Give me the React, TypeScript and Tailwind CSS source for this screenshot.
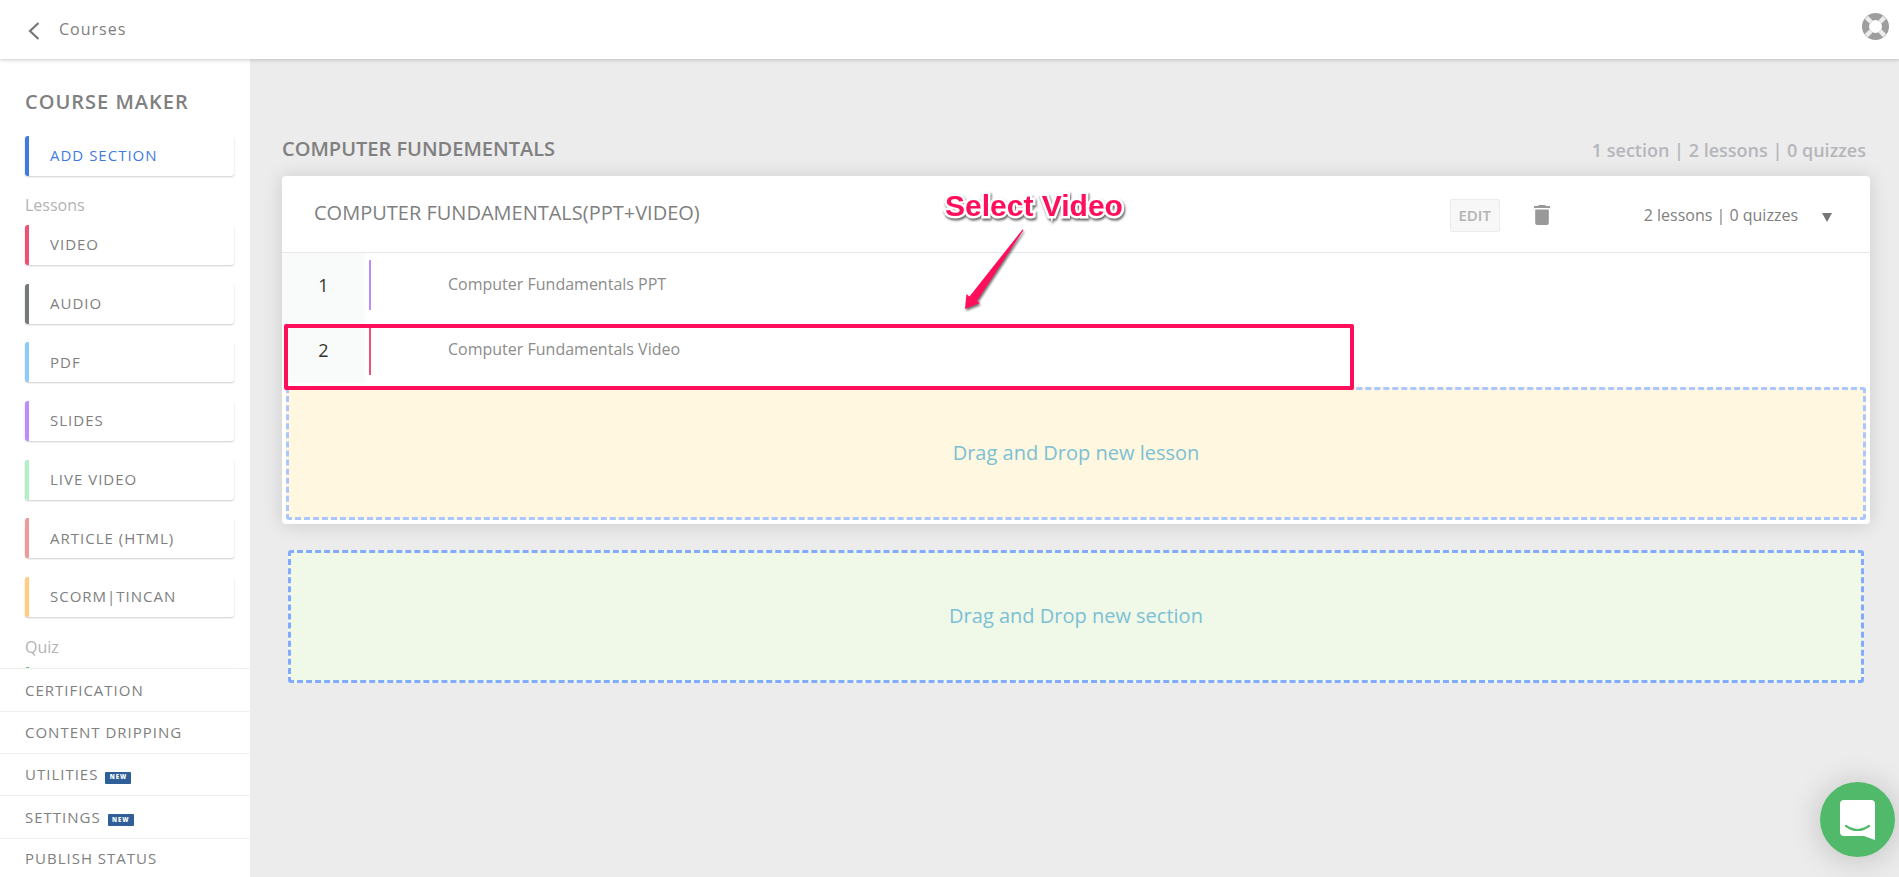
import React from 'react';

const lessonTypes = [
  { label: 'VIDEO', border: 'border-[#ee5078]' },
  { label: 'AUDIO', border: 'border-[#757a78]' },
  { label: 'PDF', border: 'border-[#90caf9]' },
  { label: 'SLIDES', border: 'border-[#c08aff]' },
  { label: 'LIVE VIDEO', border: 'border-[#b2efc4]' },
  { label: 'ARTICLE (HTML)', border: 'border-[#ef9a9a]' },
  { label: 'SCORM|TINCAN', border: 'border-[#ffcc80]' },
];

const menuItems = [
  { label: 'CERTIFICATION', isNew: false },
  { label: 'CONTENT DRIPPING', isNew: false },
  { label: 'UTILITIES', isNew: true },
  { label: 'SETTINGS', isNew: true },
  { label: 'PUBLISH STATUS', isNew: false },
];

const lessons = [
  { title: 'Computer Fundamentals PPT', bar: 'bg-[#c08aff]', highlighted: false },
  { title: 'Computer Fundamentals Video', bar: 'bg-[#ee5078]', highlighted: true },
];

function Tile({ label, border, text = 'text-[#808080]' }: { label?: string; border: string; text?: string }) {
  return (
    <button
      type="button"
      className={`flex h-10 w-full shrink-0 items-center rounded-[3px] border-l-4 bg-white pb-px pl-[21px] text-[15px] tracking-[1px] shadow-[0_1px_2px_rgba(0,0,0,0.2)] ${border} ${text}`}
    >
      {label}
    </button>
  );
}

function Header() {
  return (
    <header className="relative z-20 flex h-[59px] items-center justify-between bg-white pr-[10px] pl-7 shadow-[0_1px_4px_rgba(0,0,0,0.2)]">
      <a href="#courses" className="flex items-center gap-5 text-[#808080]">
        <svg width="11" height="18" viewBox="0 0 11 18" fill="none" stroke="#777" strokeWidth="2.2" className="mt-0.5">
          <path d="M10.500 1 2 9l8.500 8" />
        </svg>
        <span className="pb-0.5 text-base tracking-[1px]">Courses</span>
      </a>
      <button type="button" aria-label="Help" className="mb-1.5">
        <svg width="27" height="27" viewBox="0 0 27 27" fill="none">
          <circle cx="13.5" cy="13.5" r="10" stroke="#9e9e9e" strokeWidth="7" />
          <g stroke="#ececec" strokeWidth="4.4">
            <path d="M4.4 4.4l4.6 4.6M22.6 4.4l-4.6 4.6M4.4 22.6l4.6-4.6M22.6 22.6l-4.6-4.6" />
          </g>
        </svg>
      </button>
    </header>
  );
}

function Sidebar() {
  return (
    <aside className="flex h-[calc(100vh-59px)] w-[250px] shrink-0 flex-col bg-white">
      <div className="min-h-0 flex-1 overflow-hidden pr-4 pl-[25px]">
        <h1 className="mt-[29px] text-xl leading-7 font-semibold tracking-[1px] text-[#808080]">COURSE MAKER</h1>
        <div className="mt-5">
          <Tile label="ADD SECTION" border="border-[#3f7be0]" text="text-[#3f7be0]" />
        </div>
        <h2 className="mt-[17px] text-base leading-6 text-[#b3b3b3]">Lessons</h2>
        <div className="mt-2 flex h-[392px] flex-col justify-between">
          {lessonTypes.map((type) => (
            <Tile key={type.label} label={type.label} border={type.border} />
          ))}
        </div>
        <h2 className="mt-[18px] text-base leading-6 text-[#b3b3b3]">Quiz</h2>
        <div className="mt-2">
          <Tile border="border-[#66bb6a]" />
        </div>
      </div>
      <nav className="grid shrink-0 grid-rows-[43px_42px_42px_43px_39px]">
        {menuItems.map((item) => (
          <a
            key={item.label}
            href="#menu"
            className="flex items-center gap-[7px] border-t border-[#efefef] pl-[25px] text-[15px] tracking-[1px] text-[#808080]"
          >
            {item.label}
            {item.isNew && (
              <span className="mt-1.5 flex h-3 w-[26px] items-center justify-center rounded-[1px] bg-[#2f5f98] text-[6px] font-extrabold text-white">
                NEW
              </span>
            )}
          </a>
        ))}
      </nav>
    </aside>
  );
}

function Callout() {
  return (
    <div className="pointer-events-none absolute top-3 left-[660px] z-10 w-[184px]">
      <p className="text-center font-['Liberation_Sans',Arial,sans-serif] text-[30px] leading-9 font-bold whitespace-nowrap text-[#ff0f5b] [paint-order:stroke_fill] [-webkit-text-stroke:5px_white] drop-shadow-[1px_2px_1px_rgba(0,0,0,0.6)]">
        Select Video
      </p>
      <svg width="70" height="90" viewBox="0 0 70 90" className="mt-1 ml-5 overflow-visible drop-shadow-[1px_2px_1px_rgba(0,0,0,0.55)]">
        <path d="M60.500 1.500 61.500 2 15 73l3 2L3 81 4.500 66l3 2.500Z" fill="#ff0f5b" />
      </svg>
    </div>
  );
}

export default function App() {
  return (
    <div className="flex min-h-screen flex-col bg-[#ececec] font-['Open_Sans','Noto_Sans',sans-serif]">
      <Header />
      <div className="flex flex-1">
        <Sidebar />
        <main className="min-w-0 flex-1 pt-[75px] pr-[29px] pl-8">
          <div className="flex items-center justify-between pr-1">
            <h2 className="text-xl leading-7 font-semibold text-[#808080]">COMPUTER FUNDEMENTALS</h2>
            <p className="mt-0.5 text-lg leading-7 font-semibold text-[#b5b6bb]">1 section | 2 lessons | 0 quizzes</p>
          </div>

          <section className="relative mt-3 rounded-[4px] bg-white pb-1 shadow-[0_1px_20px_rgba(0,0,0,0.14)]">
            <div className="flex h-[77px] items-center border-b border-[#e8e8e8] pr-[38px] pl-8 text-[#808080]">
              <h3 className="mb-0.5 flex-1 text-xl">COMPUTER FUNDAMENTALS(PPT+VIDEO)</h3>
              <button
                type="button"
                className="mt-0.5 h-[33px] w-[50px] rounded-[2px] border border-[#ebebeb] bg-[#f7f7f7] text-[15px] font-semibold text-[#b3b3b3]"
              >
                EDIT
              </button>
              <button type="button" aria-label="Delete section" className="mt-0.5 ml-[34px]">
                <svg width="16" height="20" viewBox="0 0 16 20" fill="#999">
                  <path d="M5 0h6l1 1h4v2H0V1h4zM1.200 4.500h13.600V18a2 2 0 0 1-2 2H3.200a2 2 0 0 1-2-2z" />
                </svg>
              </button>
              <button type="button" className="mt-0.5 ml-[94px] flex items-center gap-6 text-base">
                2 lessons | 0 quizzes
                <svg width="10" height="9" viewBox="0 0 10 9" fill="#777" className="mt-1">
                  <path d="M0 0h10L5 9z" />
                </svg>
              </button>
            </div>

            <ol>
              {lessons.map((lesson, index) => (
                <li key={lesson.title} className="relative flex h-[65px]">
                  <span className="flex w-[83px] items-center justify-center bg-[#f9fbfa] pb-0.5 text-lg text-[#333]">{index + 1}</span>
                  <span className={`mt-[7px] ml-1 h-[50px] w-0.5 ${lesson.bar}`} />
                  <a href="#lesson" className="mt-[19px] ml-[77px] text-base leading-6 text-[#8c8c8c]">
                    {lesson.title}
                  </a>
                  {lesson.highlighted && (
                    <span className="pointer-events-none absolute top-1.5 left-0.5 z-10 h-[66px] w-[1070px] rounded-[2px] border-4 border-[#ff0f5b]" />
                  )}
                </li>
              ))}
            </ol>

            <div className="mx-1 mt-1 flex h-[133px] items-center justify-center rounded-[3px] border-3 border-dashed border-[#aac7ff] bg-[#fff7e0] pb-0.5 text-xl text-[#7bc0d4]">
              Drag and Drop new lesson
            </div>
            <Callout />
          </section>

          <div className="mx-1.5 mt-[26px] flex h-[133px] items-center justify-center rounded-[3px] border-3 border-dashed border-[#82aaff] bg-[#f0f8e8] pb-0.5 text-xl text-[#7bc0d4]">
            Drag and Drop new section
          </div>
        </main>
      </div>

      <button
        type="button"
        aria-label="Open chat"
        className="fixed right-1 bottom-5 flex size-[75px] items-center justify-center rounded-full bg-[#51ba6a] shadow-[0_2px_32px_rgba(0,0,0,0.2)]"
      >
        <svg width="35" height="40" viewBox="0 0 35 40" fill="none">
          <path d="M4 0h27a4 4 0 0 1 4 4v36l-11-4H4a4 4 0 0 1-4-4V4a4 4 0 0 1 4-4Z" fill="#fff" />
          <path d="M6 26q11.500 8 23 0" stroke="#51ba6a" strokeWidth="2.2" strokeLinecap="round" />
        </svg>
      </button>
    </div>
  );
}
